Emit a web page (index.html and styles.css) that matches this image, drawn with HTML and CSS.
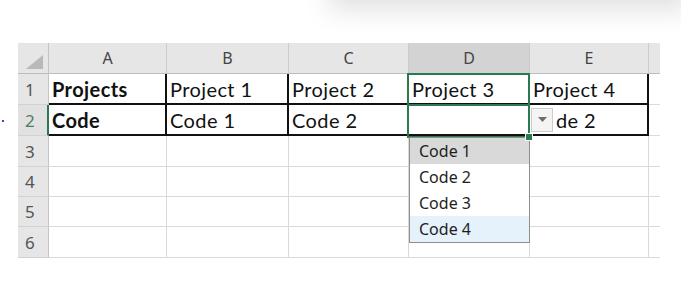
FILE: index.html
```html
<!DOCTYPE html>
<html lang="en">
<head>
    <meta charset="UTF-8">
    <title>Project codes</title>
    <link rel="stylesheet" href="styles.css">
</head>
<body>
    <div class="backdrop"><div class="card"></div></div>
    <div class="page">
        <div class="gutter"><span class="mark"></span></div>
        <div class="sheet">
            <div class="grid">
                <div class="corner"><span class="tri"></span></div>
                <div class="colhead">A</div>
                <div class="colhead">B</div>
                <div class="colhead">C</div>
                <div class="colhead active">D</div>
                <div class="colhead">E</div>
                <div class="colhead last"></div>

                <div class="rowhead">1</div>
                <div class="cell r1 sep"><b>Projects</b></div>
                <div class="cell r1 sep">Project 1</div>
                <div class="cell r1 sep">Project 2</div>
                <div class="cell r1 sep">Project 3</div>
                <div class="cell r1 sep">Project 4</div>
                <div class="cell last"></div>

                <div class="rowhead sel">2</div>
                <div class="cell r2 sep"><b>Code</b></div>
                <div class="cell r2 sep">Code 1</div>
                <div class="cell r2 sep">Code 2</div>
                <div class="cell r2 sep"></div>
                <div class="cell r2 sep">
                    <span class="ddbtn">
                        <svg width="9" height="5" viewBox="0 0 9 5"><path d="M0 0h9L4.5 5z" fill="#6d6d6d"/></svg>
                    </span>
                    <span class="tail">de 2</span>
                </div>
                <div class="cell last"></div>

                <div class="rowhead">3</div>
                <div class="cell"></div><div class="cell"></div><div class="cell"></div>
                <div class="cell"></div><div class="cell"></div><div class="cell last"></div>

                <div class="rowhead">4</div>
                <div class="cell"></div><div class="cell"></div><div class="cell"></div>
                <div class="cell"></div><div class="cell"></div><div class="cell last"></div>

                <div class="rowhead">5</div>
                <div class="cell"></div><div class="cell"></div><div class="cell"></div>
                <div class="cell"></div><div class="cell"></div><div class="cell last"></div>

                <div class="rowhead">6</div>
                <div class="cell"></div><div class="cell"></div><div class="cell"></div>
                <div class="cell"></div><div class="cell"></div><div class="cell last"></div>
            </div>

            <div class="selection"><span class="handle"></span></div>

            <ul class="dropdown">
                <li class="hover">Code 1</li>
                <li>Code 2</li>
                <li>Code 3</li>
                <li class="picked">Code 4</li>
            </ul>
        </div>
    </div>
</body>
</html>
```

FILE: styles.css
```css
html, body {
    margin: 0;
    padding: 0;
    background: #fff;
    font-family: "Noto Sans", sans-serif;
}

.backdrop {
    display: flex;
    height: 43px;
}

.card {
    margin-top: -30px;
    margin-left: 338px;
    width: 420px;
    height: 30px;
    background: #e4e4e4;
    box-shadow: 0 0 28px 9px rgba(0, 0, 0, 0.13);
}

.page {
    display: flex;
}

.gutter {
    width: 18px;
}

.mark {
    display: block;
    width: 2px;
    height: 2px;
    margin: 77px 0 0 2px;
    background: #2b4fd8;
}

.sheet {
    position: relative;
}

.grid {
    display: grid;
    grid-template-columns: 31px 118px 122px 120px 121px 119px 11px;
    grid-template-rows: 31px 31px 31px 31px 30px 30px 31px;
}

.grid > div {
    box-sizing: border-box;
}

.corner {
    display: flex;
    align-items: flex-end;
    justify-content: flex-end;
    padding: 0 5px 4px 0;
    background: #e6e6e6;
    border-right: 1px solid #c4c4c4;
    border-bottom: 1px solid #bdbdbd;
}

.tri {
    width: 0;
    height: 0;
    border-left: 17px solid transparent;
    border-bottom: 14px solid #b9b9b9;
}

.colhead {
    display: flex;
    align-items: center;
    justify-content: center;
    background: #e6e6e6;
    color: #444;
    font-size: 16px;
    border-right: 1px solid #cbcbcb;
    border-bottom: 1px solid #bdbdbd;
}

.colhead.active {
    background: #d3d3d3;
}

.colhead.last {
    border-right: none;
}

.rowhead {
    display: flex;
    align-items: center;
    padding-left: 7px;
    background: #e6e6e6;
    color: #555;
    font-size: 17px;
    border-right: 1px solid #c4c4c4;
    border-bottom: 1px solid #d2d2d2;
}

.rowhead.sel {
    color: #4f7d63;
    background: #e1e1e1;
    border-right: 2px solid #2b7a4e;
}

.cell {
    display: flex;
    align-items: center;
    padding-left: 3px;
    font-family: Lato, "Liberation Sans", sans-serif;
    font-size: 20px;
    letter-spacing: 0.4px;
    color: #111;
    border-right: 1px solid #dadada;
    border-bottom: 1px solid #dadada;
    overflow: hidden;
    white-space: nowrap;
}

.cell.last {
    border-right: none;
}

.cell.r1 {
    border-bottom: 2px solid #111;
}

.cell.r2 {
    border-bottom: 2px solid #111;
}

.cell.sep {
    border-right: 2px solid #111;
}

.ddbtn {
    display: flex;
    align-items: center;
    justify-content: center;
    box-sizing: border-box;
    width: 22px;
    height: 24px;
    margin-left: -2px;
    background: #f4f4f4;
    border: 1px solid #cdcdcd;
}

.tail {
    margin-left: 3px;
}

.selection {
    position: absolute;
    left: 389px;
    top: 30px;
    width: 123px;
    height: 65px;
    box-sizing: border-box;
    border: 2px solid #2b7a4e;
}

.selection::after {
    content: "";
    position: absolute;
    left: 0;
    right: 0;
    top: 29px;
    height: 2px;
    background: #2b7a4e;
}

.handle {
    position: absolute;
    right: -5px;
    bottom: -5px;
    width: 6px;
    height: 6px;
    background: #2b7a4e;
    border: 1px solid #fff;
    z-index: 2;
}

.dropdown {
    position: absolute;
    left: 391px;
    top: 94px;
    width: 121px;
    margin: 0;
    padding: 0;
    list-style: none;
    box-sizing: border-box;
    background: #fff;
    border: 1px solid #8e8e8e;
    font-family: "Noto Sans", sans-serif;
    font-size: 16px;
    color: #1e1e1e;
}

.dropdown li {
    display: flex;
    align-items: center;
    height: 26px;
    padding-left: 9px;
}

.dropdown li.hover {
    background: #d9d9d9;
}

.dropdown li.picked {
    background: #e5f1fb;
}
```
